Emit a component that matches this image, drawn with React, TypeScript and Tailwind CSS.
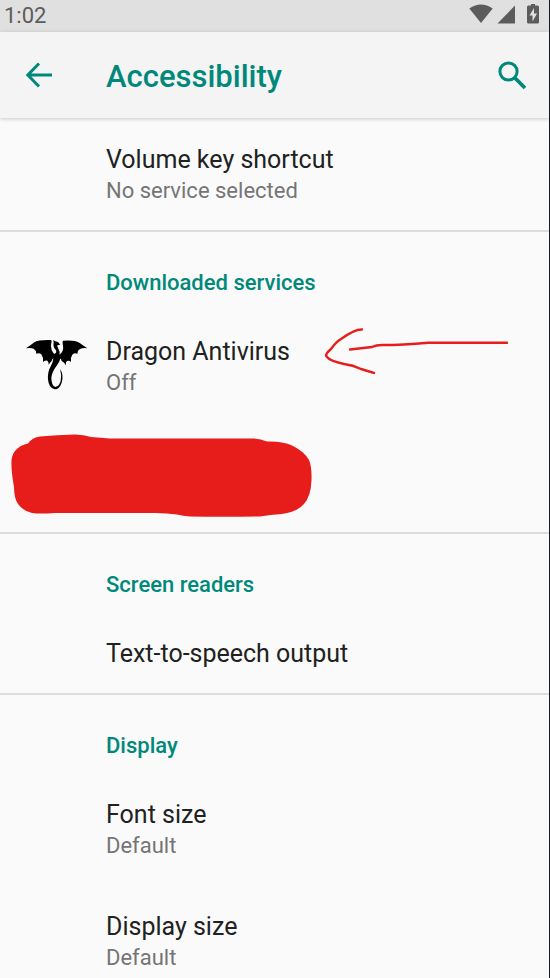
import type { ReactNode } from "react";

function StatusBar() {
  return (
    <div className="flex h-8 shrink-0 items-center justify-between bg-[#e0e0e0] pr-2 pb-1 pl-1 text-[#5c5c5c]">
      <span className="pt-1 text-[22px] leading-6">1:02</span>
      <div className="flex items-center gap-1">
        <svg className="h-5 w-6" viewBox="0 0 24 20" fill="currentColor" aria-hidden="true">
          <path d="M0.300 4.500Q12-3.500 23.700 4.500L12 19Z" />
        </svg>
        <svg className="h-5 w-5" viewBox="0 0 20 20" fill="currentColor" aria-hidden="true">
          <path d="M18 1.500V19.500H0.500Z" />
        </svg>
        <svg className="ml-1 h-5 w-4" viewBox="0 0 16 20" aria-hidden="true">
          <path fill="currentColor" d="M6 0h4v1.500h2.500q1.500 0 1.500 1.500v15q0 1.500-1.500 1.500h-9q-1.500 0-1.500-1.500v-15q0-1.500 1.500-1.500H6Z" />
          <path fill="#e0e0e0" d="M9 4L4.500 11.500h3V17.500L12 9.500H9Z" />
        </svg>
      </div>
    </div>
  );
}

function AppBar() {
  return (
    <header className="z-10 flex h-[86px] shrink-0 items-center bg-[#f4f4f4] pr-[21px] pl-6 text-[#00897b] shadow-[0_1px_4px_rgba(0,0,0,0.2)]">
      <button type="button" aria-label="Back" className="mr-[50px] flex h-12 w-8 shrink-0 items-center">
        <svg className="h-8 w-8" viewBox="0 0 32 32" fill="none" stroke="currentColor" strokeWidth="3" aria-hidden="true">
          <path d="M28 16H4M15 4.500L3.800 16L15 27.500" />
        </svg>
      </button>
      <h1 className="flex-1 pt-1 text-[31px] leading-9 font-medium">Accessibility</h1>
      <button type="button" aria-label="Search" className="flex h-12 w-8 shrink-0 items-center">
        <svg className="h-8 w-8" viewBox="0 0 32 32" fill="none" stroke="currentColor" aria-hidden="true">
          <circle cx="12.500" cy="12.500" r="8.600" strokeWidth="3" />
          <path d="M18.500 18.500l10.500 10.500" strokeWidth="3.800" />
        </svg>
      </button>
    </header>
  );
}

function DragonIcon() {
  return (
    <svg className="h-14 w-[62px]" viewBox="30 42 186 168" aria-hidden="true">
      <path d="M30 70Q45 60 55 52Q66 44 105 45Q109 47 106 53Q103 64 107 75Q111 86 120 91L118 99Q108 99 107 108Q103 112 98 119Q99 111 94 107Q86 105 81 111Q83 98 76 88Q69 82 61 86Q61 76 53 71Q43 67 30 70Z" />
      <path d="M214 70Q200 60 190 53Q175 44 141 47Q139 49 140 56Q143 69 140 77Q137 86 127 91L129 99Q137 101 137 108Q145 112 150 121Q148 111 153 108Q160 106 165 111Q163 97 169 89Q175 83 184 86Q184 76 192 72Q202 68 214 70Z" />
      <path d="M112 45L118 49L126 51L133 59L124 61Q123 64 127 71Q133 80 130 89L134 98Q130 112 122 122Q108 140 106 158Q106 181 118 186Q130 184 134 168Q138 150 132 132Q144 148 137 173Q130 193 116 193Q98 189 96 163Q94 140 105 122Q111 112 112 100L115 87Q123 84 120 76Q110 65 113 53Z" />
    </svg>
  );
}

function HandDrawnArrow() {
  return (
    <svg className="pointer-events-none absolute top-4 left-[322px] h-12 w-[190px]" viewBox="322 326 190 48" fill="none" stroke="#e71d1c" strokeWidth="2.400" strokeLinecap="round" strokeLinejoin="round" aria-hidden="true">
      <path d="M362 329.500Q355 329 341 339Q336 342 331 349Q324 355 327 357Q330 361 344 364Q353 365 361 369L374 373" />
      <path d="M350 349.500L372 347Q376 345 382 345Q403 345 428 342.700H507" />
    </svg>
  );
}

function Redaction() {
  return (
    <svg className="ml-[11px] h-[84px] w-[302px]" viewBox="11 433 302 84" fill="#e71d1c" aria-hidden="true">
      <path d="M28 443.500Q32 437.500 40 436.500Q57 434.800 75 434.500Q84 434.500 91 437L110 438.500H250Q259 438 267 441.500Q282 441 291 445Q304 451 309 460Q312 467 311.500 480Q311 496 304 504Q297 512 282 514Q270 514.500 260 516.500Q225 517 190 516.500Q183 516 177 514.500Q167 513 155 513H55Q40 514 32 513Q23 511 18 504Q14 498 14 487Q11 471 11.500 460Q13 447 28 443.500Z" />
    </svg>
  );
}

type RowProps = { title: string; summary?: string; icon?: ReactNode };

function Row({ title, summary, icon }: RowProps) {
  return (
    <button type="button" className="flex w-full items-center pt-[26px] pb-6 text-left">
      <span className="flex w-[106px] shrink-0 pl-[26px]">{icon}</span>
      <span className="flex-1">
        <span className="block text-[25px] leading-[31px] text-[#212121]">{title}</span>
        {summary && <span className="block text-[22px] leading-[31px] text-[#757575]">{summary}</span>}
      </span>
    </button>
  );
}

function Section({ heading, children }: { heading?: string; children: ReactNode }) {
  return (
    <section className="border-b-2 border-[#dddddd] last:border-b-0">
      {heading && (
        <h2 className="pt-9 pb-3 pl-[106px] text-[22px] leading-[30px] font-medium text-[#00897b]">{heading}</h2>
      )}
      {children}
    </section>
  );
}

export default function App() {
  return (
    <div className="flex h-screen flex-col overflow-hidden border-r border-[#171725] bg-[#fafafa] font-[Roboto,sans-serif]">
      <StatusBar />
      <AppBar />
      <main className="min-h-0 flex-1 overflow-y-auto [scrollbar-width:none]">
        <Section>
          <Row title="Volume key shortcut" summary="No service selected" />
        </Section>
        <Section heading="Downloaded services">
          <div className="relative">
            <Row title="Dragon Antivirus" summary="Off" icon={<DragonIcon />} />
            <HandDrawnArrow />
          </div>
          <div className="pt-[11px] pb-[15px]">
            <Redaction />
          </div>
        </Section>
        <Section heading="Screen readers">
          <Row title="Text-to-speech output" />
        </Section>
        <Section heading="Display">
          <Row title="Font size" summary="Default" />
          <Row title="Display size" summary="Default" />
        </Section>
      </main>
    </div>
  );
}
